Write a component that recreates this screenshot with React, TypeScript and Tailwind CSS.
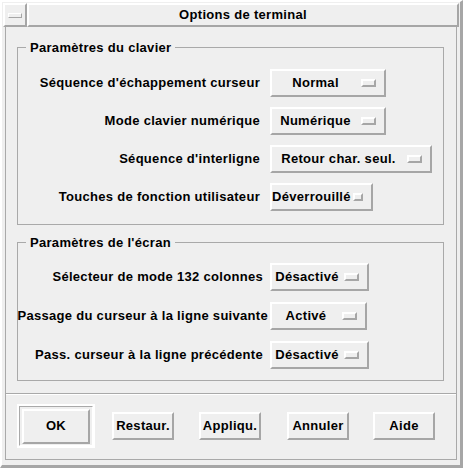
import React from 'react';

const raised = 'border-2 border-t-white border-l-white border-b-[#a6a6a6] border-r-[#a6a6a6]';

type Opt = { label: string; value: string; w: string; pr: string };

const clavier: Opt[] = [
  { label: "Séquence d'échappement curseur", value: 'Normal', w: 'w-[116px]', pr: 'pr-[10px]' },
  { label: 'Mode clavier numérique', value: 'Numérique', w: 'w-[116px]', pr: 'pr-[10px]' },
  { label: "Séquence d'interligne", value: 'Retour char. seul.', w: 'w-[162px]', pr: 'pr-[10px]' },
  { label: 'Touches de fonction utilisateur', value: 'Déverrouillé', w: 'w-[103px]', pr: 'pr-[10px]' },
];

const ecran: Opt[] = [
  { label: 'Sélecteur de mode 132 colonnes', value: 'Désactivé', w: 'w-[99px]', pr: 'pr-[7px]' },
  { label: 'Passage du curseur à la ligne suivante', value: 'Activé', w: 'w-[97px]', pr: 'pr-[2px]' },
  { label: 'Pass. curseur à la ligne précédente', value: 'Désactivé', w: 'w-[99px]', pr: 'pr-[7px]' },
];

function OptionRow({ opt }: { opt: Opt }) {
  return (
    <div className="flex items-center h-[28px]">
      <div className={`w-[252px] shrink-0 flex justify-end whitespace-nowrap ${opt.pr}`}>
        <span>{opt.label}</span>
      </div>
      <div className={`${opt.w} h-[28px] ${raised} flex items-center`}>
        <span className="flex-1 text-center whitespace-nowrap">{opt.value}</span>
        <div className={`w-[15px] h-[8px] ml-[2px] mr-[8px] ${raised}`} />
      </div>
    </div>
  );
}

function Group({ title, rows, className }: { title: string; rows: Opt[]; className: string }) {
  return (
    <fieldset className={`ml-[11px] mr-[12px] min-w-0 border border-[#a9a9a9] ${className}`}>
      <legend className="ml-[8px] px-[4px] leading-[15px]">{title}</legend>
      <div className="flex flex-col gap-[inherit]">
        {rows.map(r => (
          <OptionRow key={r.label} opt={r} />
        ))}
      </div>
    </fieldset>
  );
}

function PushButton({ label, className = '' }: { label: string; className?: string }) {
  return (
    <div className={`w-[62px] h-[28px] ${raised} flex items-center justify-center ${className}`}>
      {label}
    </div>
  );
}

export default function App() {
  return (
    <div className="w-[463px] h-[468px] bg-[#efefef] text-black font-['Liberation_Sans',Arial,sans-serif] font-bold text-[13px] tracking-[0.3px] border-t-2 border-l-2 border-r-[3px] border-b-[3px] border-t-white border-l-white border-r-[#a6a6a6] border-b-[#a6a6a6] p-px flex flex-col">
      {/* Title bar */}
      <div className="flex h-[24px] shrink-0">
        <div className={`w-[24px] h-[24px] ${raised} flex items-center justify-center`}>
          <div className="w-[14px] h-[5px] border border-t-white border-l-white border-b-[#a6a6a6] border-r-[#a6a6a6]" />
        </div>
        <div className={`flex-1 h-[24px] ${raised} flex items-center justify-center`}>Options de terminal</div>
      </div>

      {/* Body */}
      <div className="flex-1 px-[2px] pb-[4px] flex flex-col">
        <div className="flex-1 border-l border-r border-b border-[#a9a9a9] flex flex-col">
          <Group title="Paramètres du clavier" rows={clavier} className="mt-[13px] pt-[14px] pb-[13px] [&>div]:gap-[10px]" />
          <Group title="Paramètres de l'écran" rows={ecran} className="mt-[10px] pt-[13px] pb-[11px] [&>div]:gap-[11px]" />

          <div className="mt-[12px] border-t border-b border-t-[#a9a9a9] border-b-white" />

          <div className="mt-[9px] flex items-center">
            <div className="ml-[11px] w-[78px] h-[44px] border-2 border-white flex items-center justify-center">
              <div className="w-[74px] h-[40px] border border-t-[#a9a9a9] border-l-[#a9a9a9] border-b-white border-r-white flex items-center justify-center">
                <div className={`w-[68px] h-[35px] ${raised} flex items-center justify-center`}>OK</div>
              </div>
            </div>
            <PushButton label="Restaur." className="ml-[17px]" />
            <PushButton label="Appliqu." className="ml-[25px]" />
            <PushButton label="Annuler" className="ml-[26px]" />
            <PushButton label="Aide" className="ml-[24px]" />
          </div>
        </div>
      </div>
    </div>
  );
}
